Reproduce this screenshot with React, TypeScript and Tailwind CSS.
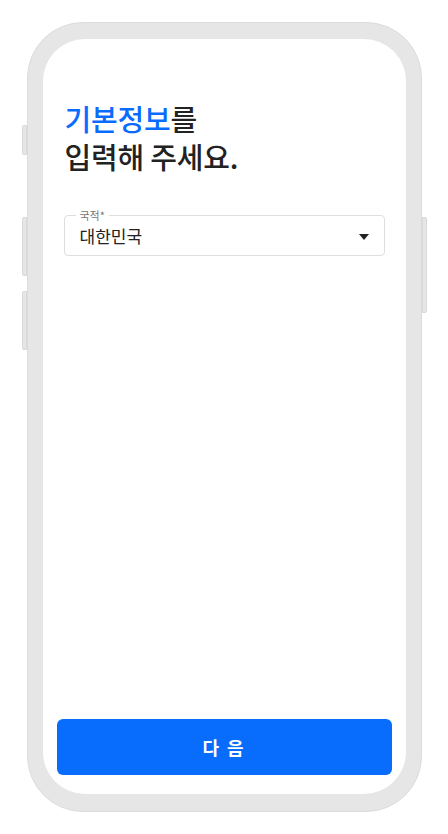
import React from 'react';

const font = { fontFamily: '"Noto Sans CJK KR", "Noto Sans", sans-serif' };

export default function App() {
  return (
    <div className="min-h-[834px] w-full bg-white flex justify-center pt-[22px]" style={font}>
      <div className="relative">
        {/* side buttons */}
        <div className="absolute -left-[5px] top-[103px] w-[5px] h-[30px] rounded-l-[2px] bg-[#e6e6e6] border border-[#d9d9d9]" />
        <div className="absolute -left-[5px] top-[195px] w-[5px] h-[59px] rounded-l-[2px] bg-[#e6e6e6] border border-[#d9d9d9]" />
        <div className="absolute -left-[5px] top-[269px] w-[5px] h-[59px] rounded-l-[2px] bg-[#e6e6e6] border border-[#d9d9d9]" />
        <div className="absolute -right-[5px] top-[195px] w-[5px] h-[96px] rounded-r-[2px] bg-[#e6e6e6] border border-[#d9d9d9]" />

        <div className="w-[395px] h-[790px] rounded-[56px] bg-[#e6e6e6] border border-[#dcdcdc] pt-[16px] pb-[17px] px-[15px]">
          <div className="h-full w-full rounded-[42px] bg-white flex flex-col px-[21px] pt-[60px] pb-[19px]">
            <h1 className="text-[29px] leading-[38px] font-medium text-[#222] pl-[1px] tracking-[-0.2px]">
              <span className="text-[#0a6cff]">기본정보</span>를
              <br />
              입력해 주세요.
            </h1>

            <div className="relative mt-[40px] h-[41px] rounded-[4px] border border-[#dedede] flex items-center px-[15px]">
              <span className="absolute -top-[8px] left-[11px] bg-white px-[4px] text-[11px] leading-[14px] text-[#777]">
                국적*
              </span>
              <span className="text-[17px] text-[#222] mt-[1px]">대한민국</span>
              <svg className="ml-auto mt-[2px]" width="10" height="6" viewBox="0 0 10 6">
                <path d="M0 0 H10 L5 6 Z" fill="#222" />
              </svg>
            </div>

            <div className="flex-1" />

            <button className="-mx-[7px] h-[56px] rounded-[6px] bg-[#086cfc] text-white text-[18px] font-bold tracking-[2px]">
              다 음
            </button>
          </div>
        </div>
      </div>
    </div>
  );
}
